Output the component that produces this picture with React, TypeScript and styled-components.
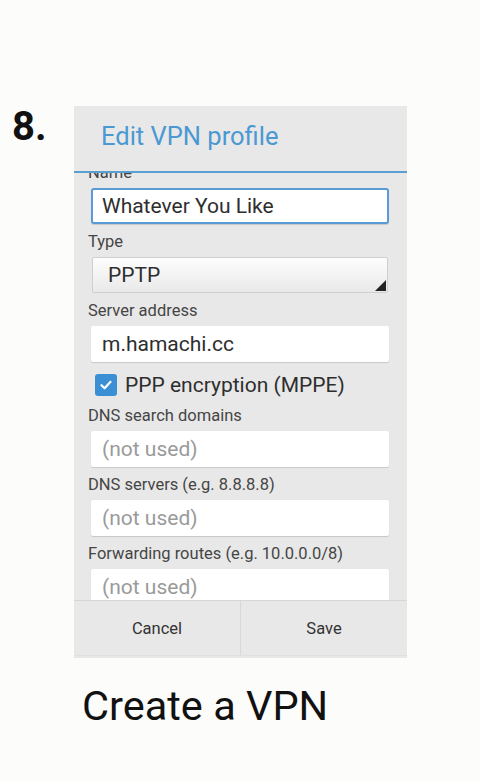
import React, { FC } from "react";
import styled, { createGlobalStyle } from "styled-components";

const GlobalStyle = createGlobalStyle`
  html, body {
    margin: 0;
    padding: 0;
    background: #fcfcfa;
    font-family: Roboto, "Liberation Sans", Arial, sans-serif;
  }
`;

const Page = styled.div`
  width: 480px;
  height: 782px;
  padding-top: 106px;
  box-sizing: border-box;
  overflow: hidden;
`;

const StepRow = styled.div`
  display: flex;
`;

const StepNumber = styled.div`
  width: 62px;
  padding-left: 12px;
  padding-top: 1px;
  font-size: 40px;
  line-height: 40px;
  font-weight: 700;
  color: #111;
`;

const Panel = styled.div`
  width: 333px;
  height: 552px;
  background: #e8e8e8;
  display: flex;
  flex-direction: column;
`;

const Header = styled.div`
  height: 67px;
  box-sizing: border-box;
  padding: 17px 0 0 27px;
  border-bottom: 2px solid #5a9fd2;
  font-size: 25.5px;
  line-height: 26px;
  color: #4a99d2;
`;

const ScrollArea = styled.div`
  height: 427px;
  overflow: hidden;
`;

const Content = styled.div`
  margin-top: -10px;
  padding: 0 18px 0 17px;
`;

const Label = styled.div`
  height: 20px;
  line-height: 20px;
  font-size: 16.5px;
  color: #454545;
  margin: 0 0 5px -3px;
  white-space: nowrap;
`;

const Field = styled.div<{ $focused?: boolean; $empty?: boolean }>`
  height: 36px;
  box-sizing: border-box;
  background: #fff;
  border-radius: ${(p) => (p.$focused ? "3px" : "2px")};
  border: ${(p) => (p.$focused ? "2px solid #5b9bd5" : "none")};
  box-shadow: 0 1px 1px rgba(0, 0, 0, 0.14);
  padding-left: ${(p) => (p.$focused ? "9px" : "11px")};
  display: flex;
  align-items: center;
  font-size: 21px;
  color: ${(p) => (p.$empty ? "#9a9a9a" : "#2e2e2e")};
  margin-bottom: 8px;
`;

const Spinner = styled.div`
  position: relative;
  height: 36px;
  margin: 0 1px 8px 1px;
  box-sizing: border-box;
  border: 1px solid #cfcfcf;
  border-radius: 2px;
  background: linear-gradient(#fdfdfd, #e9e9e9);
  padding-left: 15px;
  display: flex;
  align-items: center;
  font-size: 21px;
  color: #2e2e2e;
`;

const SpinnerCorner = styled.div`
  position: absolute;
  right: 1px;
  bottom: 1px;
  width: 0;
  height: 0;
  border-left: 11px solid transparent;
  border-bottom: 11px solid #222;
`;

const CheckRow = styled.div`
  height: 30px;
  margin: 1px 0 6px 4px;
  display: flex;
  align-items: center;
  gap: 8px;
  font-size: 21px;
  color: #2e2e2e;
`;

const CheckBox = styled.div`
  width: 22px;
  height: 22px;
  border-radius: 3px;
  background: #3b8fd5;
  display: flex;
  align-items: center;
  justify-content: center;
`;

const Footer = styled.div`
  height: 56px;
  box-sizing: border-box;
  border-top: 1px solid #d6d6d6;
  border-bottom: 1px solid #e0e0e0;
  display: flex;
`;

const FooterButton = styled.div<{ $divider?: boolean }>`
  flex: 1;
  display: flex;
  align-items: center;
  justify-content: center;
  font-size: 16.5px;
  color: #333;
  border-left: ${(p) => (p.$divider ? "1px solid #d8d8d8" : "none")};
`;

const Caption = styled.div`
  margin: 23px 0 0 82px;
  font-size: 41.5px;
  line-height: 50px;
  color: #111;
`;

type InputProps = {
  label: string;
  value: string;
  empty?: boolean;
  focused?: boolean;
};

const InputField: FC<InputProps> = ({ label, value, empty, focused }) => (
  <>
    <Label>{label}</Label>
    <Field $focused={focused} $empty={empty}>
      {value}
    </Field>
  </>
);

export default function App() {
  return (
    <Page>
      <GlobalStyle />
      <StepRow>
        <StepNumber>8.</StepNumber>
        <Panel>
          <Header>Edit VPN profile</Header>
          <ScrollArea>
            <Content>
              <InputField label="Name" value="Whatever You Like" focused />
              <Label>Type</Label>
              <Spinner>
                PPTP
                <SpinnerCorner />
              </Spinner>
              <InputField label="Server address" value="m.hamachi.cc" />
              <CheckRow>
                <CheckBox>
                  <svg width="14" height="14" viewBox="0 0 14 14">
                    <path
                      d="M2.5 7.2 L5.6 10.2 L11.5 3.8"
                      fill="none"
                      stroke="#fff"
                      strokeWidth="2.2"
                      strokeLinecap="round"
                      strokeLinejoin="round"
                    />
                  </svg>
                </CheckBox>
                PPP encryption (MPPE)
              </CheckRow>
              <InputField label="DNS search domains" value="(not used)" empty />
              <InputField label="DNS servers (e.g. 8.8.8.8)" value="(not used)" empty />
              <InputField
                label="Forwarding routes (e.g. 10.0.0.0/8)"
                value="(not used)"
                empty
              />
            </Content>
          </ScrollArea>
          <Footer>
            <FooterButton>Cancel</FooterButton>
            <FooterButton $divider>Save</FooterButton>
          </Footer>
        </Panel>
      </StepRow>
      <Caption>Create a VPN</Caption>
    </Page>
  );
}
